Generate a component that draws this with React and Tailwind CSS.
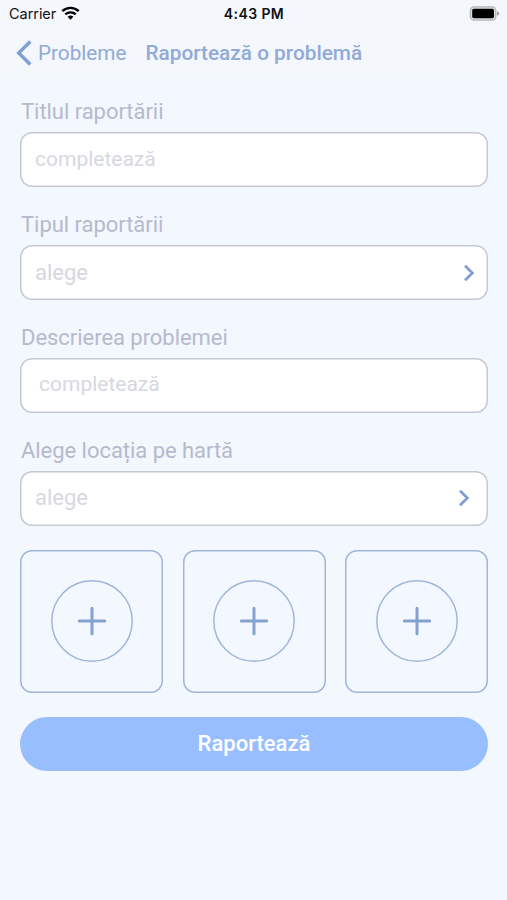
const fields = [
  {
    label: 'Titlul raportării',
    placeholder: 'completează',
    pad: 'pl-[15px] pb-px text-[21px]',
  },
  {
    label: 'Tipul raportării',
    placeholder: 'alege',
    pad: 'pl-[15px] pr-[13px] pt-px text-[22px]',
    select: true,
  },
  {
    label: 'Descrierea problemei',
    placeholder: 'completează',
    pad: 'pl-[19px] pb-0.5 text-[21px]',
  },
  {
    label: 'Alege locația pe hartă',
    placeholder: 'alege',
    pad: 'pl-[15px] pr-[18px] text-[22px]',
    select: true,
  },
];

function StatusBar() {
  return (
    <div className="grid grid-cols-3 items-center h-7 pl-[9px] pr-[7px] font-['Inter','Liberation_Sans',sans-serif] text-[#111214]">
      <div className="flex items-center gap-[5px]">
        <span className="text-[14.5px] tracking-[-0.05px]">Carrier</span>
        <svg
          className="-mt-0.5"
          width="19"
          height="14"
          viewBox="0 0 19 14"
          fill="none"
        >
          <path
            d="M1.3 5.2a11.8 11.8 0 0 1 16.4 0"
            stroke="#000"
            strokeWidth="2.4"
          />
          <path
            d="M4.3 8.4a7.5 7.5 0 0 1 10.4 0"
            stroke="#000"
            strokeWidth="2.3"
          />
          <path d="M6.6 10.8a4.2 4.2 0 0 1 5.8 0L9.5 13.7z" fill="#000" />
        </svg>
      </div>
      <span className="-ml-px -mt-px text-center text-[14px] font-semibold tracking-[0.4px]">
        4:43 PM
      </span>
      <svg
        className="justify-self-end -mt-px"
        width="31"
        height="15"
        viewBox="0 0 31 15"
      >
        <rect
          x="1.4"
          y="0.8"
          width="25.4"
          height="13.4"
          rx="3.8"
          fill="#dcdde0"
          stroke="#b4b5b8"
          strokeWidth="1.3"
        />
        <rect x="3.2" y="2.8" width="21.8" height="9.4" rx="1.6" fill="#000" />
        <path d="M28 5.2c1.6.5 2.2 1.3 2.2 2.3s-.6 1.8-2.2 2.3z" fill="#a3a4a7" />
      </svg>
    </div>
  );
}

function NavBar() {
  return (
    <div className="flex items-center h-[50px] pl-4 text-[#91aad7]">
      <button className="flex items-center text-[20.7px]">
        <svg width="17" height="28" viewBox="0 0 17 28" fill="none">
          <path
            d="M14.3 2.5 2.7 14l11.6 11.5"
            stroke="#7fa0d4"
            strokeWidth="3.4"
          />
        </svg>
        <span className="ml-[5px] pt-0.5">Probleme</span>
      </button>
      <h1 className="ml-[19px] pt-px text-[20.8px] font-medium">
        Raportează o problemă
      </h1>
    </div>
  );
}

function Field({ label, placeholder, pad, select }) {
  return (
    <div className="flex flex-col gap-2">
      <span className="pl-px text-[22px] leading-6 tracking-[-0.04px] text-[#b5bacd]">
        {label}
      </span>
      <div
        className={`flex items-center justify-between h-[55px] rounded-[12px] bg-white shadow-[inset_0_0_0_1.5px_#c5c8d7] ${pad}`}
      >
        <span className="leading-6 text-[#d6d8e0]">{placeholder}</span>
        {select && (
          <svg width="12" height="18" viewBox="0 0 12 18" fill="none">
            <path
              d="M2 1.8 9.4 9 2 16.2"
              stroke="#829fd3"
              strokeWidth="2.8"
            />
          </svg>
        )}
      </div>
    </div>
  );
}

function PhotoTile() {
  return (
    <button className="flex items-center justify-center size-[143px] rounded-[12px] shadow-[inset_0_0_0_1.5px_#a0b6dc]">
      <svg width="82" height="82" viewBox="0 0 82 82" fill="none">
        <circle cx="41" cy="41" r="40.2" stroke="#a0b6dc" strokeWidth="1.5" />
        <path
          d="M41 28.3v25.4M28.3 41h25.4"
          stroke="#84a1cf"
          strokeWidth="3"
          strokeLinecap="round"
        />
      </svg>
    </button>
  );
}

export default function App() {
  return (
    <div className="h-[900px] w-[507px] bg-[#f3f7fe] font-['Roboto',sans-serif]">
      <header className="bg-[#f4f7fb]">
        <StatusBar />
        <NavBar />
      </header>
      <main className="flex flex-col pt-[22px] pl-5 pr-[19px]">
        <div className="flex flex-col gap-[25.9px]">
          {fields.map((field) => (
            <Field key={field.label} {...field} />
          ))}
        </div>
        <div className="flex justify-between mt-6">
          <PhotoTile />
          <PhotoTile />
          <PhotoTile />
        </div>
        <button className="mt-6 h-[54px] rounded-full bg-[#99beff] text-[22px] font-medium text-white">
          Raportează
        </button>
      </main>
    </div>
  );
}
